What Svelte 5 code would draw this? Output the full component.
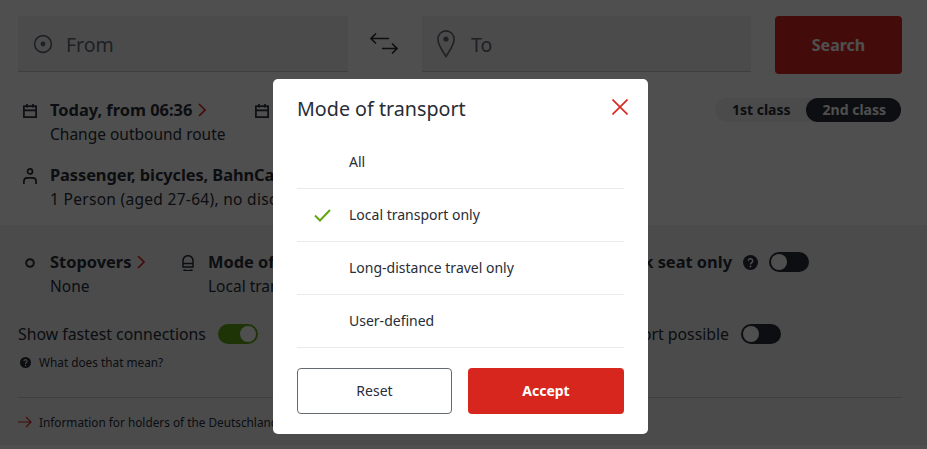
<script>
  const options = [
    { label: 'All', checked: false },
    { label: 'Local transport only', checked: true },
    { label: 'Long-distance travel only', checked: false },
    { label: 'User-defined', checked: false }
  ];
</script>

{#snippet calendar()}
  <svg class="icon" viewBox="0 0 14 14" fill="none" stroke="currentColor" stroke-width="1.7">
    <rect x="0.9" y="2.2" width="12.2" height="10.9" />
    <path d="M1 6.3h12M4 0v3.5M10 0v3.5" />
  </svg>
{/snippet}

{#snippet chevron()}
  <svg class="chevron" viewBox="0 0 8 14" fill="none" stroke="#d7261e" stroke-width="1.7">
    <path d="M1 1l6 6-6 6" />
  </svg>
{/snippet}

{#snippet help(size)}
  <svg width={size} height={size} viewBox="0 0 16 16">
    <circle cx="8" cy="8" r="8" fill="currentColor" />
    <path d="M5.7 6.2a2.3 2.3 0 1 1 3.6 1.9c-.9.6-1.3.9-1.3 1.9" fill="none" stroke="#fff" stroke-width="1.6" />
    <circle cx="8" cy="12.3" r="1" fill="#fff" />
  </svg>
{/snippet}

<div class="page">
  <section class="top">
    <div class="search-row">
      <div class="field from">
        <svg class="field-icon" viewBox="0 0 20 20" fill="none" stroke="currentColor" stroke-width="1.6">
          <circle cx="10" cy="10" r="8.4" />
          <circle cx="10" cy="10" r="2.4" fill="currentColor" stroke="none" />
        </svg>
        <span>From</span>
      </div>
      <svg class="swap" viewBox="0 0 28 21" fill="none" stroke="currentColor" stroke-width="1.6">
        <path d="M1 5.5h18M6 .5l-5 5 5 5M12 15.5h15M22 10.5l5 5-5 5" />
      </svg>
      <div class="field to">
        <svg class="pin" viewBox="0 0 18 28" fill="none" stroke="currentColor" stroke-width="1.6">
          <path d="M9 26.5C5 20 .9 15 .9 9a8.1 8.1 0 0 1 16.2 0C17.1 15 13 20 9 26.5z" />
          <circle cx="9" cy="9" r="2.6" fill="currentColor" stroke="none" />
        </svg>
        <span>To</span>
      </div>
      <button class="search">Search</button>
    </div>

    <div class="info-row">
      <div class="item">
        {@render calendar()}
        <div>
          <strong>Today, from 06:36 {@render chevron()}</strong>
          <p>Change outbound route</p>
        </div>
      </div>
      <div class="item return">
        {@render calendar()}
      </div>
      <div class="classes">
        <span class="pill">1st class</span>
        <span class="pill active">2nd class</span>
      </div>
    </div>

    <div class="item passenger">
      <svg class="icon tall" viewBox="0 0 14 16" fill="none" stroke="currentColor" stroke-width="1.7">
        <circle cx="7" cy="3.4" r="2.5" />
        <path d="M.9 16v-2.6C.9 11.2 2.4 9.9 4.4 9.9h5.2c2 0 3.5 1.3 3.5 3.5V16" />
      </svg>
      <div>
        <strong>Passenger, bicycles, BahnCard {@render chevron()}</strong>
        <p>1 Person (aged 27-64), no discount</p>
      </div>
    </div>
  </section>

  <section class="filters">
    <div class="filter-row">
      <div class="item stopovers">
        <svg class="icon" viewBox="0 0 14 14" fill="none" stroke="currentColor" stroke-width="2">
          <circle cx="7" cy="7" r="3.8" />
        </svg>
        <div>
          <strong>Stopovers {@render chevron()}</strong>
          <p>None</p>
        </div>
      </div>
      <div class="item mode">
        <svg class="icon tall" viewBox="0 0 12 16" fill="none" stroke="currentColor" stroke-width="1.5">
          <path d="M1 5.5a5 4.8 0 0 1 10 0v6.5H1zM1 8.5h10M1.5 15c2.8.9 6.2.9 9 0" />
        </svg>
        <div>
          <strong>Mode of transport {@render chevron()}</strong>
          <p>Local transport only</p>
        </div>
      </div>
      <div class="seat">
        <strong>Book seat only</strong>
        <span class="help">{@render help(15)}</span>
        <span class="toggle"></span>
      </div>
    </div>

    <div class="switch-row">
      <div class="fastest">
        <span>Show fastest connections</span>
        <span class="toggle on"></span>
      </div>
      <div class="bike">
        <span>Bicycle transport possible</span>
        <span class="toggle"></span>
      </div>
    </div>

    <div class="what">
      {@render help(11)}
      <span>What does that mean?</span>
    </div>

    <div class="notice">
      <svg class="arrow" viewBox="0 0 14 12" fill="none" stroke="#d7261e" stroke-width="1.2">
        <path d="M0 6h13M8 1l5 5-5 5" />
      </svg>
      <span>Information for holders of the Deutschland-Ticket</span>
    </div>
  </section>

  <div class="overlay"></div>

  <div class="modal">
    <header>
      <h2>Mode of transport</h2>
      <svg class="close" viewBox="0 0 16 16" fill="none" stroke="#d7261e" stroke-width="1.6">
        <path d="M.5.5l15 15M15.5.5l-15 15" />
      </svg>
    </header>
    <ul>
      {#each options as option}
        <li>
          {#if option.checked}
            <svg class="check" viewBox="0 0 17 13" fill="none" stroke="#63a615" stroke-width="2">
              <path d="M1 6.5l5 5L16 1" />
            </svg>
          {/if}
          {option.label}
        </li>
      {/each}
    </ul>
    <div class="actions">
      <button class="reset">Reset</button>
      <button class="accept">Accept</button>
    </div>
  </div>
</div>

<style>
  :global(body) {
    margin: 0;
    background: #fff;
  }

  .page {
    position: relative;
    width: 927px;
    height: 449px;
    overflow: hidden;
    font-family: "Noto Sans", "Open Sans", sans-serif;
    font-size: 15.5px;
    line-height: 24px;
    color: #282d37;
  }

  p {
    margin: 0;
    white-space: nowrap;
  }

  strong {
    font-weight: 700;
    font-size: 16.4px;
    display: flex;
    align-items: center;
    gap: 6px;
    white-space: nowrap;
  }

  .top {
    height: 225px;
    box-sizing: border-box;
    padding: 16px 25px 0 18px;
    background: #fff;
    box-shadow: 0 1px 3px rgba(0, 0, 0, 0.3);
    position: relative;
  }

  .search-row {
    display: flex;
    align-items: flex-start;
    height: 58px;
  }

  .field {
    display: flex;
    align-items: center;
    height: 56px;
    box-sizing: border-box;
    background: #f0f3f5;
    border-bottom: 1px solid #c9cccf;
    color: #646973;
    font-size: 19.5px;
  }

  .field span {
    padding-top: 2px;
  }

  .from {
    width: 330px;
    padding-left: 15px;
    gap: 13px;
  }

  .to {
    width: 329px;
    padding-left: 15px;
    gap: 16px;
  }

  .field-icon {
    width: 20px;
    height: 20px;
  }

  .pin {
    width: 18px;
    height: 28px;
  }

  .swap {
    width: 28px;
    height: 21px;
    margin: 17px 24px 0 22px;
    color: #282d37;
  }

  .search {
    width: 127px;
    height: 58px;
    margin-left: 24px;
    border: 0;
    border-radius: 4px;
    background: #d7261e;
    color: #fff;
    font: 700 16px "Noto Sans", sans-serif;
  }

  .info-row {
    display: flex;
    align-items: flex-start;
    margin-top: 24px;
  }

  .item {
    display: flex;
    gap: 13px;
    padding-left: 5px;
  }

  .icon {
    width: 14px;
    height: 14px;
    margin-top: 6px;
    flex: none;
  }

  .icon.tall {
    height: 16px;
    margin-top: 5px;
  }

  .chevron {
    width: 8px;
    height: 14px;
  }

  .return {
    margin-left: 24px;
  }

  .classes {
    display: flex;
    align-items: center;
    height: 24px;
    margin-left: auto;
    margin-right: 1px;
    border-radius: 12px;
    background: #f0f3f5;
    font-weight: 700;
    font-size: 14px;
  }

  .pill {
    padding: 0 15px 0 17px;
    line-height: 24px;
    border-radius: 12px;
  }

  .active {
    background: #282d37;
    color: #fff;
  }

  .passenger {
    margin-top: 17px;
  }

  .passenger strong {
    letter-spacing: -0.08px;
  }

  .passenger p {
    letter-spacing: 0.3px;
  }

  .filters {
    height: 220px;
    box-sizing: border-box;
    padding: 25px 25px 0 18px;
    background: #f0f3f5;
    position: relative;
  }

  .filter-row {
    display: flex;
    align-items: flex-start;
    padding-right: 93px;
  }

  .stopovers {
    width: 159px;
    flex: none;
    box-sizing: border-box;
  }

  .mode {
    gap: 14px;
  }

  .mode .icon {
    width: 12px;
  }

  .seat {
    display: flex;
    align-items: center;
    margin-left: auto;
    gap: 11px;
  }

  .help {
    display: flex;
    color: #282d37;
  }

  .toggle {
    display: block;
    position: relative;
    width: 40px;
    height: 20px;
    box-sizing: border-box;
    border-radius: 10px;
    background: #282d37;
    flex: none;
  }

  .toggle::after {
    content: "";
    position: absolute;
    left: 2px;
    top: 2px;
    width: 16px;
    height: 16px;
    border-radius: 50%;
    background: #fff;
  }

  .toggle.on {
    background: #63a615;
  }

  .toggle.on::after {
    left: 22px;
  }

  .switch-row {
    display: flex;
    justify-content: space-between;
    margin-top: 24px;
    padding-right: 121px;
    font-size: 15.8px;
  }

  .fastest,
  .bike {
    display: flex;
    align-items: center;
    gap: 12px;
  }

  .what {
    display: flex;
    align-items: center;
    gap: 8px;
    margin-top: 4px;
    padding-left: 2px;
    font-size: 11.8px;
  }

  .notice {
    display: flex;
    align-items: center;
    gap: 7px;
    margin-top: 23px;
    padding-top: 12px;
    border-top: 1px solid #c9cccf;
    font-size: 11.8px;
  }

  .arrow {
    width: 14px;
    height: 12px;
  }

  .overlay {
    position: absolute;
    inset: 0;
    background: rgba(0, 0, 0, 0.69);
  }

  .modal {
    position: absolute;
    left: 273px;
    top: 79px;
    width: 375px;
    height: 355px;
    box-sizing: border-box;
    padding: 0 24px;
    background: #fff;
    border-radius: 5px;
  }

  header {
    display: flex;
    justify-content: space-between;
    align-items: center;
    height: 57px;
    padding-top: 3px;
    box-sizing: border-box;
    margin-right: -4px;
  }

  h2 {
    margin: 0;
    font-size: 19.7px;
    font-weight: 400;
  }

  .close {
    width: 16px;
    height: 16px;
    margin-bottom: 5px;
  }

  ul {
    list-style: none;
    margin: 0;
    padding: 0;
  }

  li {
    position: relative;
    height: 53px;
    box-sizing: border-box;
    display: flex;
    align-items: center;
    padding-left: 52px;
    border-bottom: 1px solid #e8ebee;
    font-size: 14px;
  }

  .check {
    position: absolute;
    left: 17px;
    top: 20px;
    width: 17px;
    height: 13px;
  }

  .actions {
    display: flex;
    gap: 16px;
    margin-top: 20px;
  }

  .actions button {
    height: 46px;
    padding: 0 0 2px;
    border-radius: 4px;
    font-family: "Noto Sans", sans-serif;
    font-size: 14px;
  }

  .reset {
    width: 155px;
    background: #fff;
    border: 1px solid #646973;
    color: #282d37;
  }

  .accept {
    width: 156px;
    background: #d7261e;
    border: 0;
    color: #fff;
    font-weight: 700;
  }
</style>
